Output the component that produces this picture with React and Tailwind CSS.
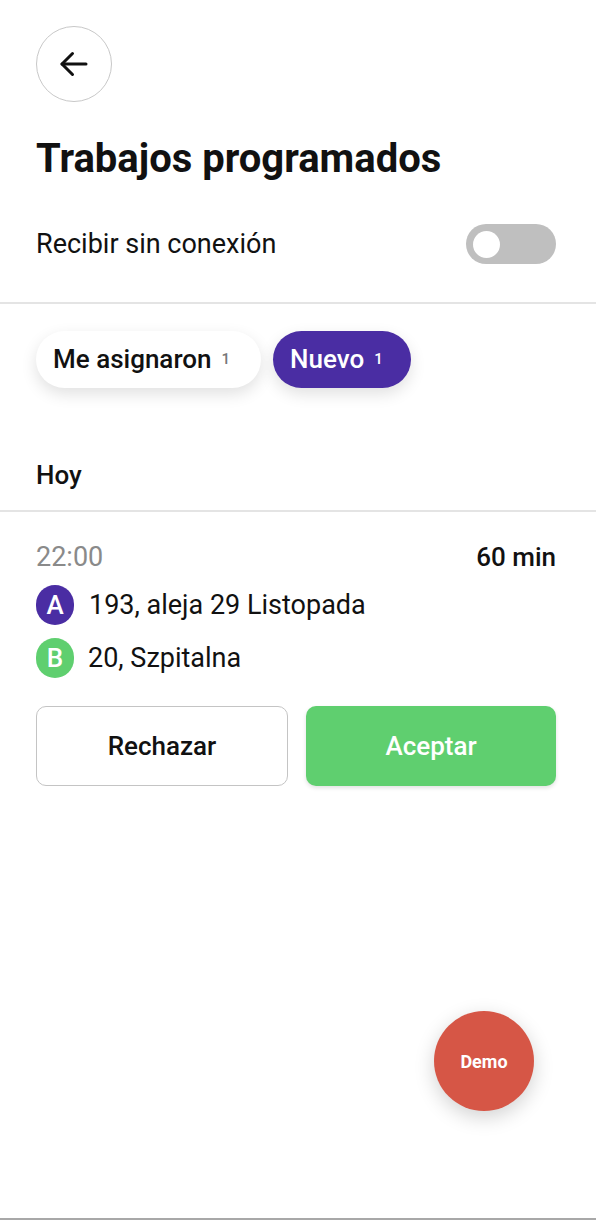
import React from "react";

export default function App() {
  return (
    <div
      className="relative w-full h-[1220px] bg-white overflow-hidden text-[#111]"
      style={{ fontFamily: "Roboto, 'Noto Sans', sans-serif" }}
    >
      <div className="pl-[36px] pr-[40px]">
        <button className="mt-[26px] w-[76px] h-[76px] rounded-full border border-[#c8c8c8] flex items-center justify-center bg-white">
          <svg width="36" height="36" viewBox="0 0 24 24" fill="none" stroke="#111" strokeWidth="2" strokeLinecap="round" strokeLinejoin="round">
            <path d="M20 12H4" />
            <path d="M11 5l-7 7 7 7" />
          </svg>
        </button>
        <h1 className="mt-[35px] h-[44px] leading-[44px] text-[40px] font-bold">
          Trabajos programados
        </h1>
        <div className="mt-[43px] h-[40px] flex items-center justify-between">
          <span className="text-[27px] leading-[32px]">Recibir sin conexión</span>
          <div className="w-[90px] h-[40px] rounded-full bg-[#bfbfbf] flex items-center pl-[7px]">
            <div className="w-[27px] h-[27px] rounded-full bg-white" />
          </div>
        </div>
      </div>
      <div className="mt-[38px] h-[2px] bg-[#e4e4e4]" />
      <div className="pl-[36px] pr-[40px]">
        <div className="mt-[27px] flex gap-[12px]">
          <div className="h-[57px] w-[225px] rounded-full bg-white shadow-[0_6px_16px_rgba(0,0,0,0.12)] flex items-center pl-[17px] gap-[10px]">
            <span className="text-[26px] font-medium">Me asignaron</span>
            <span className="text-[15px] text-[#777] font-medium">1</span>
          </div>
          <div className="h-[57px] w-[138px] rounded-full bg-[#4a2da3] shadow-[0_6px_16px_rgba(0,0,0,0.12)] flex items-center pl-[17px] gap-[10px] text-white">
            <span className="text-[26px] font-medium">Nuevo</span>
            <span className="text-[15px] font-medium">1</span>
          </div>
        </div>
        <div className="mt-[67px] h-[40px] flex items-center">
          <span className="text-[26px] font-medium">Hoy</span>
        </div>
      </div>
      <div className="mt-[15px] h-[2px] bg-[#e4e4e4]" />
      <div className="pl-[36px] pr-[40px]">
        <div className="mt-[29px] h-[32px] flex items-center justify-between">
          <span className="text-[27px] text-[#8a8a8a]">22:00</span>
          <span className="text-[26px] font-medium">60 min</span>
        </div>
        <div className="mt-[12px] h-[40px] flex items-center gap-[15px]">
          <div className="w-[38px] h-[40px] rounded-full bg-[#4a2da3] text-white flex items-center justify-center text-[26px] font-medium">A</div>
          <span className="text-[27px]">193, aleja 29 Listopada</span>
        </div>
        <div className="mt-[13px] h-[40px] flex items-center gap-[14px]">
          <div className="w-[38px] h-[40px] rounded-full bg-[#5fcf6f] text-white flex items-center justify-center text-[26px] font-medium">B</div>
          <span className="text-[27px]">20, Szpitalna</span>
        </div>
        <div className="mt-[28px] flex gap-[18px]">
          <button className="flex-1 h-[80px] rounded-[10px] border-[1.5px] border-[#c4c4c4] bg-white text-[26px] font-medium text-[#111]">
            Rechazar
          </button>
          <button className="flex-1 h-[80px] rounded-[10px] bg-[#5fcf6f] text-[26px] font-medium text-white shadow-[0_2px_4px_rgba(0,0,0,0.12)]">
            Aceptar
          </button>
        </div>
      </div>

      <button className="absolute right-[62px] bottom-[109px] w-[100px] h-[100px] rounded-full bg-[#d65646] text-white font-bold text-[18px] shadow-[0_6px_20px_rgba(0,0,0,0.18)] flex items-center justify-center">
        Demo
      </button>
      <div className="absolute left-0 right-0 bottom-0 h-[2px] bg-[#a8a8a8]" />
    </div>
  );
}
